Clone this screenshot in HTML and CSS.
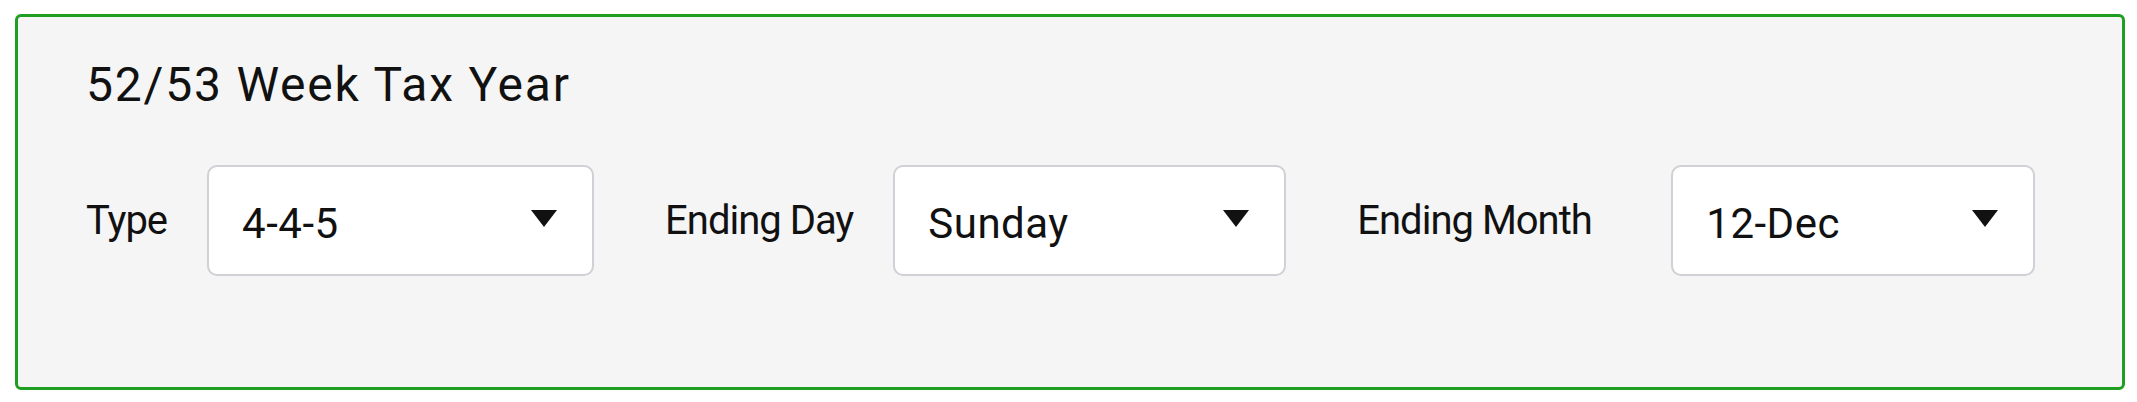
FILE: index.html
```html
<!DOCTYPE html>
<html lang="en">
<head>
  <meta charset="UTF-8" />
  <meta name="viewport" content="width=device-width, initial-scale=1.0"/>
  <title>52/53 Week Tax Year</title>
  <link rel="stylesheet" href="styles.css">
</head>
<body>
  <section class="tax-card">
    <h2 class="tax-title">52/53 Week Tax Year</h2>

    <div class="field-row">
      <div class="field">
        <span class="field-label">Type</span>
        <div class="dropdown dropdown-type">
          <span class="dropdown-value">4-4-5</span>
          <svg class="dropdown-arrow" width="26" height="17" viewBox="0 0 26 17"><polygon points="0,0 26,0 13,17" fill="#111"/></svg>
        </div>
      </div>

      <div class="field">
        <span class="field-label">Ending Day</span>
        <div class="dropdown dropdown-day">
          <span class="dropdown-value">Sunday</span>
          <svg class="dropdown-arrow" width="26" height="17" viewBox="0 0 26 17"><polygon points="0,0 26,0 13,17" fill="#111"/></svg>
        </div>
      </div>

      <div class="field">
        <span class="field-label label-month">Ending Month</span>
        <div class="dropdown dropdown-month">
          <span class="dropdown-value">12-Dec</span>
          <svg class="dropdown-arrow" width="26" height="17" viewBox="0 0 26 17"><polygon points="0,0 26,0 13,17" fill="#111"/></svg>
        </div>
      </div>
    </div>
  </section>
</body>
</html>
```

FILE: styles.css
```css
body {
  font-family: Roboto, 'Liberation Sans', sans-serif;
  background-color: #ffffff;
  color: #111111;
  margin: 0;
  padding: 14px 12px 0 15px;
}

.tax-card {
  background-color: #f5f5f5;
  border: 3px solid #1f9e22;
  border-radius: 6px;
  padding: 39px 40px 111px 68px;
}

.tax-title {
  font-size: 48px;
  font-weight: 400;
  line-height: 58px;
  letter-spacing: 1.8px;
  margin: 0 0 51px;
}

.field-row {
  display: flex;
  align-items: center;
}

.field {
  display: flex;
  align-items: center;
  gap: 40px;
}

.field + .field {
  margin-left: 71px;
}

.field-label {
  font-size: 40px;
  letter-spacing: -1px;
}

.label-month {
  min-width: 274px;
}

.dropdown {
  display: flex;
  align-items: center;
  justify-content: space-between;
  box-sizing: border-box;
  height: 111px;
  padding: 0 35px 0 33px;
  background-color: #ffffff;
  border: 2px solid #d0d0d6;
  border-radius: 10px;
}

.dropdown-type { width: 387px; }
.dropdown-day { width: 393px; }
.dropdown-month { width: 364px; }

.dropdown-value {
  font-size: 42px;
  letter-spacing: 0.5px;
  padding-top: 5px;
}

.dropdown-arrow {
  display: block;
  margin-top: -4px;
}
```
